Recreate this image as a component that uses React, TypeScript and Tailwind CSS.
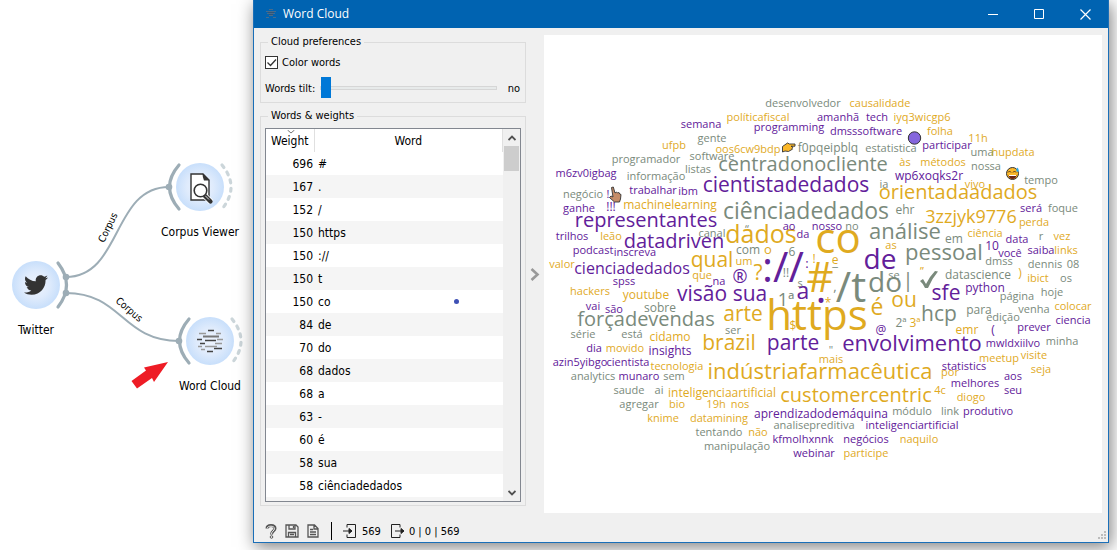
import React from "react";
import { FaTwitter } from "react-icons/fa";

type Tone = "p" | "g" | "y";
type Word = [text: string, left: number, right: number, baseline: number, size: number, tone: Tone];

const TONES: Record<Tone, string> = {
  p: "text-[#62209a]",
  g: "text-[#7a8a7c]",
  y: "text-[#dfaa1f]",
};

const SIZES: Record<number, string> = {
  11: "text-[11px]",
  12: "text-[12px]",
  13: "text-[13px]",
  16: "text-[16px]",
  18: "text-[18px]",
  20: "text-[20px]",
  21: "text-[21px]",
  22: "text-[22px]",
  23: "text-[23px]",
  25: "text-[25px]",
  28: "text-[28px]",
  42: "text-[42px]",
};

// Canvas origin that the word coordinates are measured from.
const ORIGIN_X = 544;
const ORIGIN_Y = 35;
// Distance from line top to baseline, in ems, at line-height 1.
const BASELINE = 0.888;

const CLOUD: Word[] = [
  ["semana", 682, 720, 128, 11, "p"],
  ["gente", 697, 727, 142, 11, "g"],
  ["ufpb", 662, 685, 149, 11, "y"],
  ["software", 690, 734, 160, 11, "g"],
  ["programador", 612, 679, 163, 11, "g"],
  ["listas", 685, 711, 173, 11, "g"],
  ["informação", 627, 685, 180, 11, "g"],
  ["m6zv0igbag", 556, 616, 177, 11, "p"],
  ["negócio", 563, 602, 198, 11, "g"],
  ["!", 607, 609, 198, 11, "p"],
  ["trabalhar", 630, 676, 194, 11, "p"],
  ["ibm", 678, 697, 195, 11, "p"],
  ["ganhe", 564, 594, 212, 11, "p"],
  ["!!!", 606, 616, 212, 12, "p"],
  ["machinelearning", 622, 718, 210, 12, "y"],
  ["representantes", 575, 716, 228, 20, "p"],
  ["desenvolvedor", 766, 840, 107, 11, "g"],
  ["causalidade", 851, 909, 107, 11, "y"],
  ["políticafiscal", 727, 788, 121, 11, "y"],
  ["amanhã", 818, 858, 121, 11, "p"],
  ["tech", 866, 887, 121, 11, "p"],
  ["iyq3wicgp6", 894, 950, 121, 11, "y"],
  ["programming", 753, 825, 131, 11, "p"],
  ["dmsssoftware", 831, 901, 135, 11, "p"],
  ["oos6cw9bdp", 714, 781, 153, 11, "y"],
  ["f0pqeipblq", 797, 858, 153, 12, "g"],
  ["estatistica", 865, 916, 152, 11, "g"],
  ["centradonocliente", 716, 890, 172, 20, "g"],
  ["às", 899, 910, 166, 11, "y"],
  ["métodos", 920, 966, 166, 11, "y"],
  ["cientistadedados", 702, 869, 193, 21, "p"],
  ["wp6xoqks2r", 895, 963, 181, 12, "p"],
  ["ia", 879, 888, 188, 11, "g"],
  ["orientadaadados", 877, 1038, 200, 20, "y"],
  ["ciênciadedados", 723, 889, 219, 23, "g"],
  ["ehr", 896, 914, 215, 12, "g"],
  ["folha", 927, 952, 135, 11, "y"],
  ["11h", 969, 987, 142, 11, "y"],
  ["participar", 923, 971, 149, 11, "p"],
  ["uma", 971, 992, 156, 11, "g"],
  ["hupdata", 992, 1034, 156, 11, "y"],
  ["nossa", 971, 1000, 170, 11, "g"],
  ["tempo", 1024, 1057, 184, 11, "g"],
  ["vivo", 964, 985, 188, 11, "y"],
  ["3zzjyk9776", 923, 1018, 223, 18, "y"],
  ["será", 1020, 1041, 212, 11, "p"],
  ["foque", 1048, 1077, 212, 11, "g"],
  ["perda", 1019, 1049, 226, 11, "y"],
  ["trilhos", 557, 587, 240, 11, "p"],
  ["leão", 600, 621, 240, 11, "y"],
  ["canal", 698, 725, 237, 11, "g"],
  ["datadriven", 623, 724, 249, 20, "p"],
  ["podcast", 573, 613, 254, 11, "p"],
  ["inscreva", 614, 656, 256, 11, "p"],
  ["valor", 549, 574, 268, 11, "y"],
  ["cienciadedados", 575, 688, 274, 16, "p"],
  ["qual", 690, 733, 268, 21, "y"],
  ["que", 692, 711, 279, 11, "y"],
  ["na", 713, 725, 285, 11, "p"],
  ["spss", 613, 635, 285, 11, "p"],
  ["hackers", 570, 609, 295, 11, "y"],
  ["youtube", 622, 669, 300, 12, "y"],
  ["visão", 676, 727, 302, 21, "p"],
  ["vai", 586, 600, 310, 11, "p"],
  ["são", 605, 623, 313, 11, "p"],
  ["sobre", 644, 675, 313, 12, "g"],
  ["forçadevendas", 575, 716, 327, 20, "g"],
  ["série", 571, 594, 338, 11, "g"],
  ["está", 621, 642, 338, 11, "g"],
  ["cidamo", 649, 691, 342, 12, "y"],
  ["ser", 725, 741, 334, 11, "g"],
  ["dados", 725, 796, 243, 25, "y"],
  ["“", 745, 749, 233, 11, "g"],
  ["ao", 782, 796, 230, 11, "p"],
  ["da", 796, 810, 238, 11, "p"],
  ["nosso", 811, 843, 230, 11, "p"],
  ["no", 845, 858, 230, 11, "g"],
  ["co", 816, 860, 253, 42, "y"],
  ["análise", 869, 941, 239, 22, "g"],
  ["com", 734, 761, 255, 12, "g"],
  ["o", 763, 772, 255, 13, "y"],
  ["um", 735, 752, 265, 11, "y"],
  ["6", 789, 795, 257, 12, "g"],
  ["://", 761, 805, 282, 42, "p"],
  [":", 805, 808, 269, 13, "p"],
  ["!", 812, 815, 264, 12, "y"],
  ["e", 831, 838, 265, 12, "y"],
  ["_", 831, 839, 267, 13, "g"],
  ["de", 864, 896, 269, 28, "p"],
  ["as", 885, 896, 249, 11, "y"],
  ["pessoal", 905, 982, 260, 22, "g"],
  ["®", 732, 748, 283, 18, "p"],
  ["?", 753, 763, 281, 21, "y"],
  ["!!", 783, 788, 278, 12, "g"],
  ["#", 807, 833, 292, 42, "y"],
  ["/t", 836, 866, 302, 42, "g"],
  [",", 833, 836, 292, 13, "g"],
  ["do", 868, 901, 292, 28, "g"],
  ["se", 888, 900, 279, 11, "g"],
  ["|", 906, 910, 288, 20, "g"],
  ["”", 920, 924, 275, 11, "y"],
  ["sua", 733, 767, 302, 21, "p"],
  ["1ª", 778, 794, 306, 18, "g"],
  ["a", 797, 809, 299, 23, "p"],
  ["s", 798, 802, 287, 11, "g"],
  [".", 816, 825, 303, 42, "p"],
  ["*", 825, 830, 308, 12, "y"],
  ["https", 767, 867, 330, 42, "y"],
  ["$", 790, 796, 331, 12, "y"],
  ["é", 870, 883, 315, 23, "y"],
  ["ou", 891, 917, 308, 21, "y"],
  ["2ª", 895, 907, 328, 12, "g"],
  ["3ª", 909, 921, 328, 12, "y"],
  ["arte", 723, 763, 322, 21, "y"],
  ["@", 875, 886, 335, 12, "p"],
  ["em", 945, 962, 244, 12, "g"],
  ["ciência", 966, 1004, 237, 11, "y"],
  ["data", 1005, 1028, 243, 11, "p"],
  ["r", 1039, 1043, 240, 11, "g"],
  ["vez", 1054, 1070, 240, 11, "y"],
  ["10", 986, 998, 251, 12, "p"],
  ["você", 998, 1022, 257, 11, "p"],
  ["saiba", 1028, 1054, 254, 11, "p"],
  ["links", 1055, 1077, 254, 11, "y"],
  ["dmss", 985, 1013, 265, 11, "g"],
  ["dennis", 1028, 1061, 268, 11, "g"],
  ["08", 1067, 1079, 268, 11, "g"],
  ["datascience", 944, 1012, 280, 12, "g"],
  [")", 1018, 1021, 278, 12, "y"],
  ["ibict", 1027, 1048, 282, 11, "y"],
  ["os", 1060, 1071, 282, 11, "g"],
  ["sfe", 932, 960, 301, 21, "p"],
  ["python", 965, 1005, 293, 12, "p"],
  ["página", 999, 1034, 300, 11, "g"],
  ["hoje", 1041, 1063, 296, 11, "g"],
  ["para", 966, 991, 315, 12, "g"],
  ["hcp", 921, 957, 322, 21, "g"],
  ["venha", 1019, 1049, 313, 11, "g"],
  ["colocar", 1055, 1091, 310, 11, "y"],
  ["edição", 985, 1020, 321, 11, "g"],
  ["ciencia", 1056, 1090, 324, 11, "p"],
  ["emr", 956, 978, 335, 12, "y"],
  ["(", 991, 994, 335, 12, "p"],
  ["prever", 1018, 1050, 331, 11, "p"],
  ["dia", 586, 601, 352, 11, "p"],
  ["movido", 606, 644, 352, 11, "y"],
  ["insights", 649, 691, 356, 12, "p"],
  ["brazil", 702, 756, 351, 21, "y"],
  ["parte", 766, 819, 351, 21, "p"],
  ["azin5yibgo", 552, 607, 366, 11, "p"],
  ["cientista", 607, 649, 366, 11, "p"],
  ["tecnologia", 649, 704, 370, 11, "y"],
  ["analytics", 572, 614, 380, 11, "g"],
  ["munaro", 619, 658, 380, 11, "p"],
  ["sem", 663, 684, 380, 11, "g"],
  ["indústriafarmacêutica", 710, 930, 379, 22, "y"],
  ["saude", 614, 643, 394, 11, "g"],
  ["ai", 655, 663, 394, 11, "g"],
  ["inteligenciaartificial", 669, 775, 398, 12, "y"],
  ["agregar", 619, 658, 408, 11, "g"],
  ["bio", 669, 685, 408, 11, "y"],
  ["19h", 707, 725, 408, 11, "y"],
  ["nos", 731, 749, 408, 11, "y"],
  ["customercentric", 779, 932, 403, 20, "y"],
  ["knime", 648, 678, 422, 11, "y"],
  ["datamining", 690, 748, 422, 11, "y"],
  ["aprendizadodemáquina", 754, 887, 419, 12, "p"],
  ["analisepreditiva", 774, 853, 429, 11, "g"],
  ["tentando", 697, 741, 436, 11, "g"],
  ["não", 748, 767, 436, 11, "y"],
  ["kfmolhxnnk", 774, 832, 443, 11, "p"],
  ["negócios", 843, 889, 443, 11, "p"],
  ["naquilo", 900, 937, 443, 11, "y"],
  ["manipulação", 705, 768, 450, 11, "g"],
  ["webinar", 794, 833, 457, 11, "p"],
  ["participe", 844, 888, 457, 11, "y"],
  ["mais", 819, 843, 363, 11, "y"],
  ["\"", 829, 833, 354, 11, "g"],
  ["envolvimento", 842, 981, 351, 22, "p"],
  ["mwldxiilvo", 986, 1040, 347, 11, "p"],
  ["minha", 1047, 1077, 345, 11, "g"],
  ["meetup", 979, 1018, 362, 11, "y"],
  ["visite", 1021, 1047, 359, 11, "y"],
  ["statistics", 942, 986, 370, 11, "p"],
  ["por", 941, 958, 376, 11, "y"],
  ["aos", 1004, 1022, 380, 11, "p"],
  ["seja", 1031, 1050, 373, 11, "y"],
  ["melhores", 951, 998, 387, 11, "p"],
  ["4c", 934, 945, 394, 11, "y"],
  ["seu", 1004, 1021, 394, 11, "p"],
  ["diogo", 956, 986, 401, 11, "y"],
  ["módulo", 892, 931, 415, 11, "g"],
  ["link", 941, 959, 415, 11, "g"],
  ["produtivo", 964, 1012, 415, 11, "p"],
  ["inteligenciartificial", 866, 957, 429, 11, "p"],
];

const ROWS: [number, string][] = [
  [696, "#"],
  [167, "."],
  [152, "/"],
  [150, "https"],
  [150, "://"],
  [150, "t"],
  [150, "co"],
  [84, "de"],
  [70, "do"],
  [68, "dados"],
  [68, "a"],
  [63, "-"],
  [60, "é"],
  [58, "sua"],
  [58, "ciênciadedados"],
];

function Workflow() {
  return (
    <svg
      width="253"
      height="543"
      viewBox="0 0 253 543"
      className="block font-['DejaVu_Sans_Condensed','DejaVu_Sans',sans-serif] text-[12px]"
      role="img"
      aria-label="Workflow"
    >
      <defs>
        <radialGradient id="node">
          <stop offset="0" stopColor="#eef4fe" />
          <stop offset="0.55" stopColor="#dfebfc" />
          <stop offset="1" stopColor="#c8dffb" />
        </radialGradient>
      </defs>
      <g fill="none" stroke="#9dadb6" strokeWidth="2">
        <path d="M66 277C122 277 112 187 169 187" />
        <path d="M66 293C122 293 122 341 179 341" />
      </g>
      <g fill="none" stroke="#9dadb6" strokeWidth="3.2" strokeLinecap="round">
        <path d="M58 263Q75 285 58 307" />
        <path d="M179 165Q160 187 179 209" />
        <path d="M189 319Q170 341 189 363" />
        <g stroke="#ccd6da" strokeDasharray="3 5.5">
          <path d="M222 165Q240 187 222 209" />
          <path d="M232 319Q250 341 232 363" />
        </g>
      </g>
      <g fill="#9dadb6">
        <circle cx="66" cy="277" r="3.3" />
        <circle cx="66" cy="293" r="3.3" />
        <circle cx="169" cy="187" r="3.3" />
        <circle cx="179" cy="341" r="3.3" />
      </g>
      <g fill="url(#node)">
        <circle cx="36" cy="285" r="24" />
        <circle cx="200" cy="187" r="24" />
        <circle cx="210" cy="341" r="24" />
      </g>
      <FaTwitter x={24} y={273} size={24} color="#333" />
      <g>
        <path d="M191 174h12l6 6v20h-18z" fill="#fff" stroke="#333" strokeWidth="1.4" />
        <path d="M202.500 173.500l7 7h-5.500q-1.500-3-1.500-7z" fill="#333" />
        <path d="M205 196l6 6" stroke="#fff" strokeWidth="6" />
        <path d="M205 196l5.500 5.500" stroke="#333" strokeWidth="4.200" strokeLinecap="round" />
        <path d="M205 195.500l4 4" stroke="#ddd" strokeWidth="1" />
        <circle cx="200.500" cy="190.500" r="6.300" fill="#fff" stroke="#333" strokeWidth="1.600" />
      </g>
      <g fill="none" strokeWidth="1.300">
        <path d="M208 330.500h6M205 340.500h11M197 339.500h5M200 343.500h5M214 348.500h8M207 351.500h6" stroke="#444" />
        <path d="M203 336.500h16" stroke="#777" strokeWidth="2" />
        <path d="M199 333.500h7M216 333.500h5M217 339.500h6M215 343.500h7M205 346.500h12M198 346.500h4M201 349.500h4" stroke="#999" />
      </g>
      <path d="M131.500 381L146 370.500l-2-3 24-5.500-14 20-2-4-15 10.500z" fill="#ee1c25" />
      <g textAnchor="middle" fill="#000">
        <text x="200" y="236">Corpus Viewer</text>
        <text x="36" y="334">Twitter</text>
        <text x="210" y="390">Word Cloud</text>
        <g className="text-[10px]">
          <text transform="translate(111 229) rotate(-64)">Corpus</text>
          <text transform="translate(127 312) rotate(41)">Corpus</text>
        </g>
      </g>
    </svg>
  );
}

function TitleBar() {
  const button = "flex h-7 w-[46px] items-center justify-center hover:bg-white/10";
  return (
    <header className="flex h-7 shrink-0 items-center bg-[#0063b1] pl-[11px] text-white">
      <svg width="12" height="12" viewBox="0 0 12 12" className="mr-[6px]" stroke="#466c8e" fill="none" aria-hidden="true">
        <path d="M4 1.500h4M1 3.500h10M2 5.500h8M4 7.500h4M1 9.500h3M8 9.500h3" />
        <path d="M3 4.500h6M4 6.500h4" stroke="#2f5577" />
      </svg>
      <h1 className="flex-1 font-['Open_Sans',sans-serif] text-[12px] leading-4">Word Cloud</h1>
      <button type="button" aria-label="Minimize" className={button}>
        <svg width="11" height="11" stroke="#fff"><path d="M0 5.500h10" /></svg>
      </button>
      <button type="button" aria-label="Maximize" className={button}>
        <svg width="11" height="11" stroke="#fff" fill="none"><path d="M.5.500h9v9h-9z" /></svg>
      </button>
      <button type="button" aria-label="Close" className={button}>
        <svg width="11" height="11" stroke="#fff" strokeWidth="1.200"><path d="M.5.500l10 10M10.500.500l-10 10" /></svg>
      </button>
    </header>
  );
}

function Preferences() {
  return (
    <fieldset className="min-w-0 border border-[#dcdcdc] px-1 pb-[3px]">
      <legend className="ml-[3px] px-[3px] leading-[14px]">Cloud preferences</legend>
      <label className="mt-[7px] flex h-[13px] items-center gap-1">
        <span className="relative flex size-[13px]">
          <input type="checkbox" defaultChecked className="peer size-[13px] appearance-none border border-[#333] bg-white" />
          <svg viewBox="0 0 13 13" className="pointer-events-none absolute inset-0 hidden peer-checked:block" fill="none" stroke="#333" strokeWidth="1.300">
            <path d="M2.500 6.500l3 3 5.500-6" />
          </svg>
        </span>
        Color words
      </label>
      <div className="mt-2 flex h-[22px] items-center">
        <label htmlFor="tilt" className="w-[55px] shrink-0">Words tilt:</label>
        <input
          id="tilt"
          type="range"
          min={0}
          max={3}
          defaultValue={0}
          className="h-[21px] w-0 flex-1 appearance-none bg-transparent [&::-webkit-slider-runnable-track]:h-1 [&::-webkit-slider-runnable-track]:border [&::-webkit-slider-runnable-track]:border-[#d6d6d6] [&::-webkit-slider-runnable-track]:bg-[#e7eaea] [&::-webkit-slider-thumb]:-mt-[10px] [&::-webkit-slider-thumb]:h-[21px] [&::-webkit-slider-thumb]:w-[10px] [&::-webkit-slider-thumb]:appearance-none [&::-webkit-slider-thumb]:bg-[#0078d7]"
        />
        <output htmlFor="tilt" className="w-6 pr-px text-right">no</output>
      </div>
    </fieldset>
  );
}

function Weights() {
  return (
    <fieldset className="mt-[6px] flex min-h-0 min-w-0 flex-1 border border-[#dcdcdc] px-1 pt-[5px] pb-[3px]">
      <legend className="ml-[3px] px-[3px] leading-[14px]">Words &amp; weights</legend>
      <div className="relative flex min-h-0 min-w-0 flex-1 border border-[#828790] bg-white">
        <div className="min-w-0 flex-1 overflow-hidden">
          <table className="w-full table-fixed border-collapse text-[12px] leading-4">
            <thead>
              <tr className="h-[23px]">
                <th className="relative w-[48px] border-r border-[#e0e0e0] p-0 text-center font-normal">
                  <svg width="8" height="4" className="absolute top-px left-[21px]" fill="none" stroke="#777"><path d="M.5 0l3.500 3 3.500-3" /></svg>
                  Weight
                </th>
                <th className="border-r border-[#e0e0e0] p-0 text-center font-normal">Word</th>
              </tr>
            </thead>
            <tbody>
              {ROWS.map(([weight, word], i) => (
                <tr key={i} className="h-[23px] even:bg-[#f5f5f5]">
                  <td className="p-0 pr-px text-right">{weight}</td>
                  <td className="p-0 pl-1">{word}</td>
                </tr>
              ))}
              <tr className="h-[23px] bg-[#f5f5f5]"><td colSpan={2} /></tr>
            </tbody>
          </table>
        </div>
        <div className="flex w-[17px] shrink-0 flex-col bg-[#f0f0f0]">
          <button type="button" aria-label="Scroll up" className="flex h-[17px] items-center justify-center">
            <svg width="8" height="6" fill="none" stroke="#505050" strokeWidth="1.800"><path d="M.5 5L4 1.500 7.500 5" /></svg>
          </button>
          <div className="mx-px flex-1"><div className="h-[25px] bg-[#cdcdcd]" /></div>
          <button type="button" aria-label="Scroll down" className="flex h-[17px] items-center justify-center">
            <svg width="8" height="6" fill="none" stroke="#505050" strokeWidth="1.800"><path d="M.5 1L4 4.500 7.500 1" /></svg>
          </button>
        </div>
        <span className="absolute top-[170px] left-[188px] size-[5px] rounded-full bg-[#3f51b5]" />
      </div>
    </fieldset>
  );
}

function Cloud() {
  return (
    <section aria-label="Word cloud" className="relative min-w-0 flex-1 overflow-hidden bg-white font-['Open_Sans','Noto_Sans',sans-serif]">
      {CLOUD.map(([text, left, right, baseline, size, tone], i) => (
        <span
          key={i}
          className={`absolute -translate-x-1/2 leading-none whitespace-nowrap ${SIZES[size]} ${TONES[tone]}`}
          style={{
            left: Math.round((left + right) / 2 - ORIGIN_X),
            top: Math.round(baseline - BASELINE * size - ORIGIN_Y),
          }}
        >
          {text}
        </span>
      ))}
      <svg width="558" height="478" viewBox="544 35 558 478" className="pointer-events-none absolute top-0 left-0" aria-hidden="true">
        <circle cx="914.500" cy="138" r="6.200" fill="#8566dd" stroke="#333" />
        <path d="M920 281l3-2 3 5q4-8 9-13l3 .5q-6 7-10 16.500h-3q-1.500-4-5-7z" fill="#7a8a7c" />
        <path d="M782.500 146.500l5-3.500 2 1h5.500v2.200h-4l2 1-1 1 .5 1-1.500.8-2.500 1.500-3.500-.5-2.500 1z" fill="#fbb829" stroke="#333" strokeWidth=".9" strokeLinejoin="round" />
        <path d="M611.500 187.500l1.800-.5 1.700 6 1.500-1 1 1 1.500-.5.800 1.500 1.200.5-.5 4.500-1 3h-5l-5-4.500 1.500-1.500 2 1z" fill="#c68d68" stroke="#333" strokeWidth=".9" strokeLinejoin="round" />
        <circle cx="1012.500" cy="173.500" r="6" fill="#fbb829" stroke="#333" />
        <path d="M1008.500 175h8q-.5 4-4 4t-4-4z" fill="#6b2416" />
        <path d="M1009 175.500h7" stroke="#fff" />
        <path d="M1008 172.500l1.500-1.500 1.500 1.500M1013 172.500l1.500-1.500 1.500 1.500" fill="none" stroke="#4a3020" />
        <path d="M1017.500 167.500q2.500 3.500 0 4.500-2.500-1 0-4.500z" fill="#28a8e8" />
      </svg>
    </section>
  );
}

function StatusBar() {
  const button = "flex h-4 items-center justify-center";
  return (
    <footer className="flex h-[29px] shrink-0 items-center bg-[#f0f0f0] pt-[7px] pl-[11px]">
      <button type="button" aria-label="Help" className={`${button} w-3`}>
        <svg width="12" height="15" viewBox="0 0 12 15" fill="none">
          <path d="M2 4.500C2 .500 10 .500 10 4.500 10 7 6.500 7 6.500 10.500" stroke="#555" strokeWidth="3" />
          <path d="M2.200 4.200C2.500 1.500 9.500 1.500 9.500 4.500 9.500 7 6.500 7 6.500 10" stroke="#eee" strokeWidth="1" />
          <circle cx="6.500" cy="13" r="1.300" stroke="#555" />
        </svg>
      </button>
      <button type="button" aria-label="Save" className={`${button} ml-2 w-[14px]`}>
        <svg width="14" height="14" viewBox="0 0 14 14" fill="none" stroke="#555" strokeWidth="1.300">
          <path d="M1 1h10l2 2v10H1zM4 1v4h6V1M3.500 13V8.500h7V13M8.500 2v2M5 10.500h4" />
        </svg>
      </button>
      <button type="button" aria-label="Report" className={`${button} ml-2 w-3`}>
        <svg width="12" height="14" viewBox="0 0 12 14" fill="none" stroke="#555" strokeWidth="1.300">
          <path d="M1 1h6.500L11 4.500V13H1zM7 1v4h4M3 5.500h3M3 8h6M3 10.500h6" />
        </svg>
      </button>
      <span className="ml-3 h-[18px] w-px bg-black" />
      <svg width="14" height="14" viewBox="0 0 14 14" className="ml-[11px]" fill="none" stroke="#222" aria-hidden="true">
        <path d="M4 3.500v-3h8.500v13H4v-3M0 7h8.500" />
        <path d="M6 4.500L9 7 6 9.500z" fill="#222" />
      </svg>
      <span className="ml-[5px]">569</span>
      <svg width="14" height="14" viewBox="0 0 14 14" className="ml-[10px]" fill="none" stroke="#222" aria-hidden="true">
        <path d="M9 3.500v-3H.5v13H9v-3M4 7h8.500" />
        <path d="M10 4.500L13 7l-3 2.500z" fill="#222" />
      </svg>
      <span className="ml-1">0 | 0 | 569</span>
      <svg width="11" height="11" viewBox="0 0 11 11" className="mr-px ml-auto self-end" fill="#bcbcbc" aria-hidden="true">
        <path d="M8 0h2v2H8zM5 3h2v2H5zM8 3h2v2H8zM2 6h2v2H2zM5 6h2v2H5zM8 6h2v2H8z" />
      </svg>
    </footer>
  );
}

export default function App() {
  return (
    <main className="flex h-screen overflow-hidden bg-white text-black">
      <div className="w-[253px] shrink-0">
        <Workflow />
      </div>
      <div className="mr-2 mb-[7px] flex min-w-0 flex-1 flex-col border-x border-b border-[#1a6fb8] bg-[#f0f0f0] font-['DejaVu_Sans_Condensed','DejaVu_Sans',sans-serif] text-[11px] leading-[13px] shadow-[2px_4px_16px_rgba(0,0,0,0.5)]">
        <TitleBar />
        <div className="flex min-h-0 flex-1 pt-[7px] pr-[6px] pl-[6px]">
          <div className="flex w-[266px] shrink-0 flex-col pb-[7px]">
            <Preferences />
            <Weights />
          </div>
          <button type="button" aria-label="Toggle controls" className="flex w-[18px] shrink-0 items-center justify-center">
            <svg width="10" height="13" fill="none" stroke="#999" strokeWidth="2.600"><path d="M1.500 1L7.500 6.500 1.500 12" /></svg>
          </button>
          <Cloud />
        </div>
        <StatusBar />
      </div>
    </main>
  );
}
